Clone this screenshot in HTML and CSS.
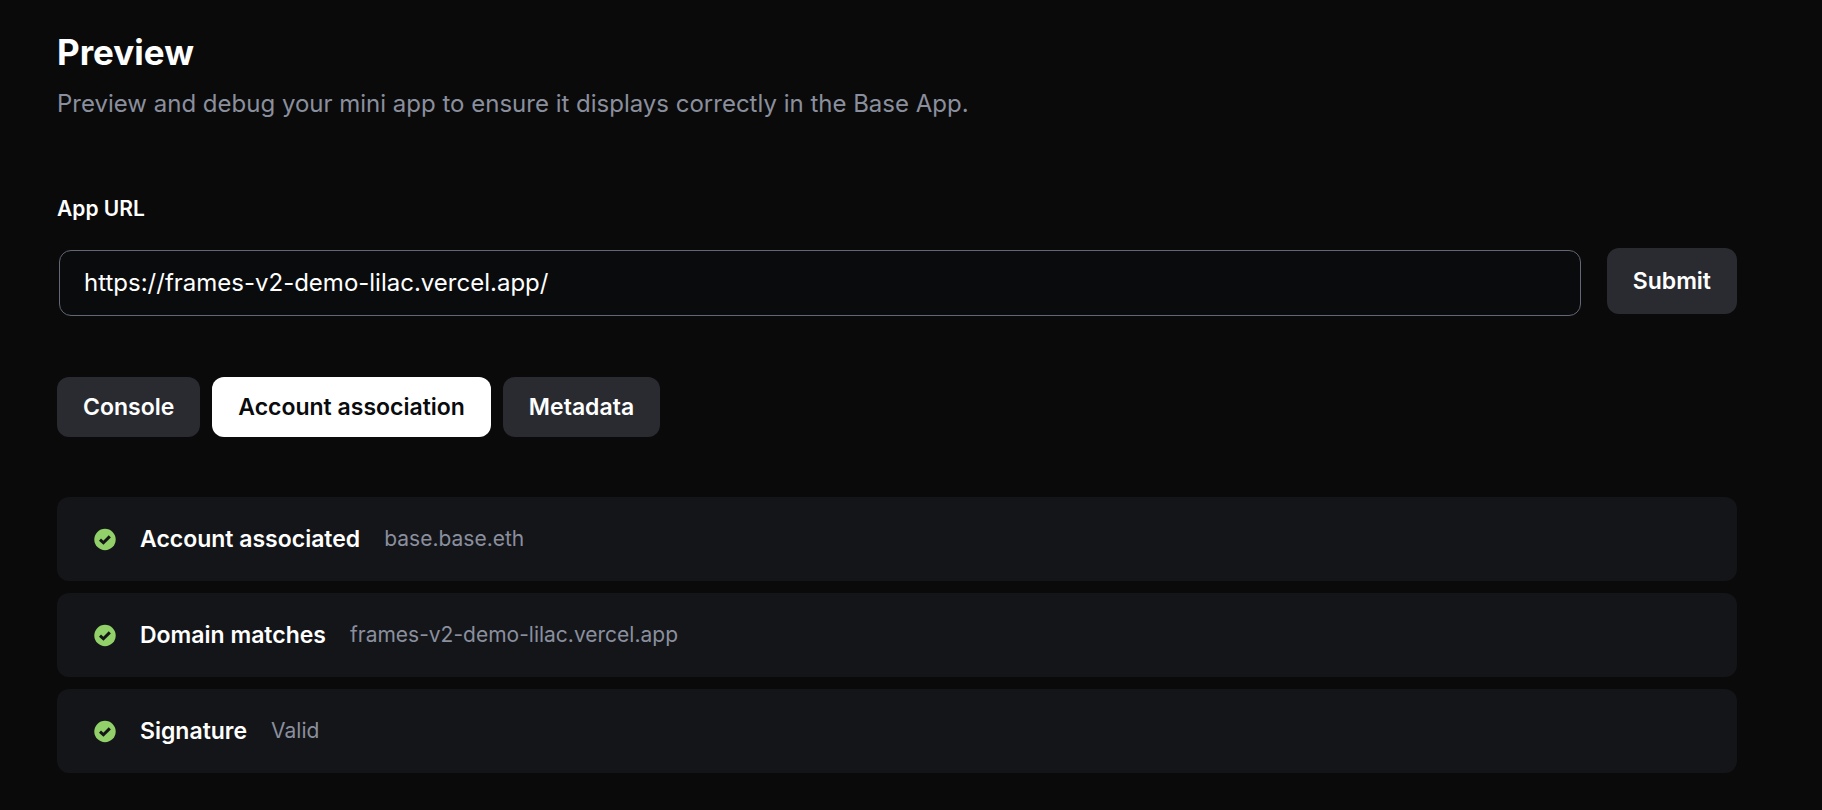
FILE: index.html
```html
<!DOCTYPE html>
<html lang="en">
<head>
<meta charset="utf-8">
<meta name="viewport" content="width=device-width, initial-scale=1">
<title>Preview</title>
<link rel="stylesheet" href="styles.css">
</head>
<body>
<svg class="sprite" aria-hidden="true">
  <symbol id="check" viewBox="0 0 23 23">
    <circle class="check-disc" cx="12" cy="11.5" r="10.7"/>
    <path class="check-mark" d="M7 11.7 10.4 14.8 16.8 8.4"/>
  </symbol>
</svg>
<main class="page">
  <header class="intro">
    <h1 class="title">Preview</h1>
    <p class="subtitle">Preview and debug your mini app to ensure it displays correctly in the Base App.</p>
  </header>
  <form class="url-form">
    <label class="label" for="app-url">App URL</label>
    <div class="url-row">
      <div class="field"><input class="input" id="app-url" type="text" value="https://frames-v2-demo-lilac.vercel.app/" spellcheck="false"></div>
      <button class="button submit" type="submit">Submit</button>
    </div>
  </form>
  <nav class="tabs" aria-label="Debug views">
    <button class="button" type="button">Console</button>
    <button class="button active" type="button" aria-current="true">Account association</button>
    <button class="button" type="button">Metadata</button>
  </nav>
  <ul class="checks">
    <li class="check"><svg class="icon" aria-hidden="true"><use href="#check"/></svg><span class="name">Account associated</span><span class="value">base.base.eth</span></li>
    <li class="check"><svg class="icon" aria-hidden="true"><use href="#check"/></svg><span class="name">Domain matches</span><span class="value">frames-v2-demo-lilac.vercel.app</span></li>
    <li class="check"><svg class="icon" aria-hidden="true"><use href="#check"/></svg><span class="name">Signature</span><span class="value">Valid</span></li>
  </ul>
</main>
</body>
</html>
```
FILE: styles.css
```css
* { box-sizing: border-box; }

body {
  margin: 0;
  background: #0a0a0a;
  color: #fff;
  font-family: Inter, "Liberation Sans", sans-serif;
  font-size: 24px;
}

.sprite { position: absolute; width: 0; height: 0; }

.page {
  display: flex;
  flex-direction: column;
  padding: 31px 85px 37px 57px;
}

.title {
  margin: 0;
  font-size: 35px;
  font-weight: 700;
  line-height: 42px;
}

.subtitle {
  margin: 13px 0 0;
  color: #8a8f9e;
  line-height: 36px;
}

.url-form { margin-top: 72px; }

.label {
  display: block;
  font-size: 21px;
  font-weight: 600;
  line-height: 30px;
}

.url-row {
  display: flex;
  align-items: flex-start;
  gap: 24px;
  margin-top: 24px;
}

.field { flex: 1; padding: 2px; }

.input {
  display: block;
  width: 100%;
  height: 66px;
  padding: 0 24px 2px;
  border: 1px solid #636675;
  border-radius: 12px;
  background: #0a0b0d;
  color: #fff;
  font: inherit;
}

.button {
  height: 60px;
  padding: 0 26px;
  border: 0;
  border-radius: 12px;
  background: #2a2b31;
  color: #fff;
  font: inherit;
  font-size: 23px;
  font-weight: 600;
}

.button.active { background: #fff; color: #0a0b0d; }
.button.submit { height: 66px; }

.tabs {
  display: flex;
  gap: 12px;
  margin-top: 59px;
}

.checks {
  display: flex;
  flex-direction: column;
  gap: 12px;
  margin: 60px 0 0;
  padding: 0;
  list-style: none;
}

.check {
  display: flex;
  align-items: center;
  gap: 24px;
  min-height: 84px;
  padding: 24px 36px;
  border-radius: 12px;
  background: #141519;
}

.icon { width: 23px; height: 23px; }
.check-disc { fill: #92d069; }
.check-mark { fill: none; stroke: #141519; stroke-width: 3; }

.name { font-size: 23px; font-weight: 600; }
.value { padding-bottom: 2px; color: #8a8f9e; font-size: 21px; }
```
